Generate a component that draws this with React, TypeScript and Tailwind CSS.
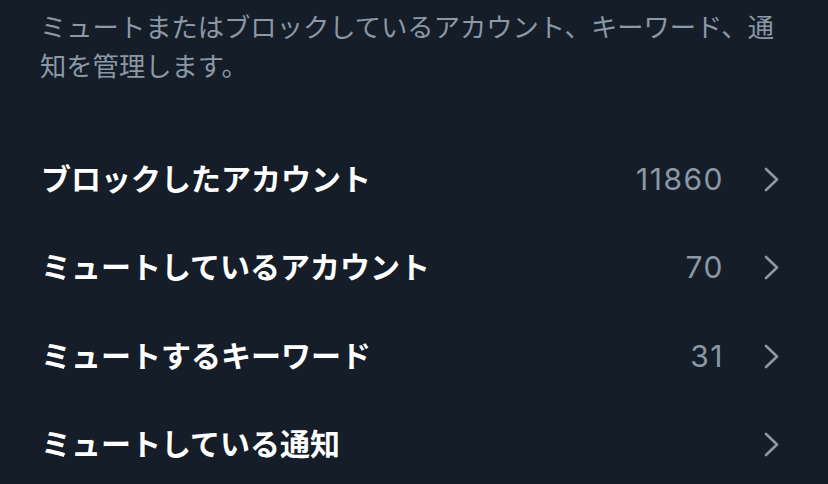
const rows = [
  { label: 'ブロックしたアカウント', count: '11860' },
  { label: 'ミュートしているアカウント', count: '70' },
  { label: 'ミュートするキーワード', count: '31' },
  { label: 'ミュートしている通知', count: '' },
];

function Chevron() {
  return (
    <svg width="15" height="25" viewBox="0 0 15 25" fill="none" className="shrink-0">
      <path d="M2 2l11 10.5L2 23" stroke="#8b98a5" strokeWidth="2.6" strokeLinecap="round" strokeLinejoin="round" />
    </svg>
  );
}

export default function App() {
  return (
    <div
      className="h-[484px] w-[828px] overflow-hidden bg-[#151d28]"
      style={{ fontFamily: 'Inter, "Noto Sans CJK JP", sans-serif' }}
    >
      <p className="px-[40px] pt-[8px] text-[26.3px] leading-[39px] text-[#8b98a5]">
        ミュートまたはブロックしているアカウント、キーワード、通知を管理します。
      </p>

      <div className="mt-[49px]">
        {rows.map((r) => (
          <div key={r.label} className="flex h-[88.5px] items-center pl-[41px] pr-[49px]">
            <div className="flex-1 text-[30px] font-bold text-white">{r.label}</div>
            {r.count && <div className="text-[30px] tracking-[1.5px] text-[#8b98a5]">{r.count}</div>}
            <div className="ml-[40px]">
              <Chevron />
            </div>
          </div>
        ))}
      </div>
    </div>
  );
}
